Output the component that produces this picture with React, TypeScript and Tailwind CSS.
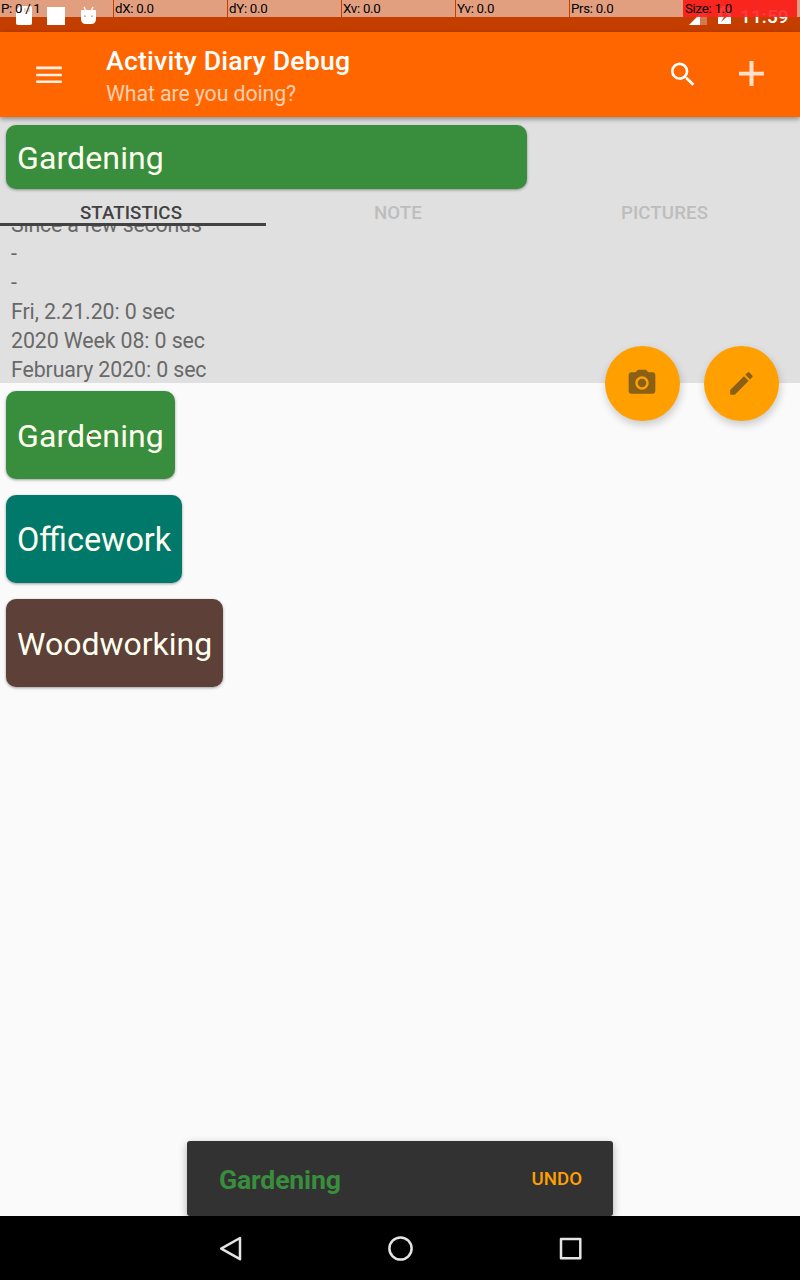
const metrics = ['P: 0 / 1', 'dX: 0.0', 'dY: 0.0', 'Xv: 0.0', 'Yv: 0.0', 'Prs: 0.0', 'Size: 1.0'];

const stats = ['Since a few seconds', '-', '-', 'Fri, 2.21.20: 0 sec', '2020 Week 08: 0 sec', 'February 2020: 0 sec'];

const activities = [
  { name: 'Gardening', style: 'w-[169px] bg-[#388e3c] text-[32px] tracking-[0.12px]' },
  { name: 'Officework', style: 'w-[176px] bg-[#00796b] text-[32.400px]' },
  { name: 'Woodworking', style: 'w-[217px] bg-[#5d4037] text-[32px]' },
];

const cardShadow = 'shadow-[0_1px_3px_rgba(0,0,0,0.38)]';

function StatusBar() {
  return (
    <header className="relative h-8 shrink-0 bg-[#c43e00]">
      <svg className="block h-8 w-[800px]" viewBox="0 0 800 32">
        <path d="M20 6h10q2 0 2 2v15q0 2-2 2H18q-2 0-2-2V10z" fill="#fff" />
        <path d="M21 8v4M25 8v4M29 8v4" stroke="#c43e00" strokeOpacity=".6" strokeWidth="1.4" />
        <path d="M47 7h18v18H47z" fill="#fff" />
        <path d="M84 7l2 4M93 7l-2 4" stroke="#fff" strokeWidth="1.3" />
        <path d="M81 11q0-1 1-1h13q1 0 1 1v8q0 5-5 5h-5q-5 0-5-5z" fill="#fff" />
        <circle cx="85" cy="16.2" r="0.9" fill="#c43e00" />
        <circle cx="92" cy="16.2" r="0.9" fill="#c43e00" />
        <path d="M707 7v18h-18z" fill="#fff" fillOpacity=".3" />
        <path d="M700 14v11h-11z" fill="#fff" />
        <path d="M722 6h5v2h4v16h-13V8h4z" fill="#fff" />
        <path d="M727 10l-5.500 6h3l-3.500 6 7.500-7h-3z" fill="#c43e00" />
      </svg>
      <span className="absolute top-[5px] left-[740px] text-[19px] leading-[23px] font-medium tracking-[0.1px] text-white">11:59</span>
      <div className="absolute inset-x-0 top-0 flex h-[17px]">
        {metrics.map((label, i) => (
          <div
            key={label}
            className={
              i === 6
                ? 'w-[114px] bg-[#ff2424]/90 pl-0.5'
                : i === 5
                  ? 'w-[113px] bg-white/50 pl-px'
                  : 'mr-px w-[113px] bg-white/50 pl-px'
            }
          >
            <span className="block text-[13.300px] leading-[17px] tracking-[-0.3px] whitespace-nowrap text-black">{label}</span>
          </div>
        ))}
        <div className="flex-1 bg-white/50" />
      </div>
    </header>
  );
}

function AppBar() {
  return (
    <div className="relative z-10 flex h-[85px] shrink-0 items-start bg-[#ff6600] shadow-[0_2px_5px_rgba(0,0,0,0.4)]">
      <svg className="mt-[27px] ml-[33px] size-8" viewBox="0 0 32 32" fill="#fff" fillOpacity=".9">
        <path d="M3.200 7.600h25.600v2.600H3.200zM3.200 14.700h25.600v2.600H3.200zM3.200 21.400h25.600v2.600H3.200z" />
      </svg>
      <div className="ml-[41px] flex-1 pt-[14px]">
        <h1 className="text-[26.667px] leading-[31px] font-medium tracking-[0.2px] text-white">Activity Diary Debug</h1>
        <p className="mt-[4px] text-[21.333px] leading-[25px] tracking-[-0.11px] text-white/70">What are you doing?</p>
      </div>
      <svg className="mt-[26px] size-8 translate-y-[0.5px]" viewBox="0 0 24 24" fill="#fff">
        <path d="M15.500 14h-.79l-.28-.27A6.471 6.471 0 0 0 16 9.500 6.500 6.500 0 1 0 9.500 16c1.610 0 3.090-.59 4.230-1.570l.27.28v.79l5 4.990L20.490 19l-4.990-5zm-6 0C7.010 14 5 11.990 5 9.500S7.010 5 9.500 5 14 7.010 14 9.500 11.990 14 9.500 14z" />
      </svg>
      <svg className="mt-[27px] mr-[33px] ml-[36px] size-8" viewBox="0 0 32 32" fill="#fff" fillOpacity=".8">
        <path d="M14.500 2h4v10.700H29v3.700H18.500V27h-4V16.400H4v-3.700h10.500z" />
      </svg>
    </div>
  );
}

const fabClass =
  'absolute top-[229px] flex size-[75px] items-center justify-center rounded-full bg-[#ffa000] shadow-[1px_4px_9px_rgba(0,0,0,0.2)]';

function Detail() {
  return (
    <section className="relative h-[266px] shrink-0 bg-[#e0e0e0] pt-2">
      <div
        className={`ml-1.5 h-16 w-[521px] rounded-[10px] bg-[#388e3c] pt-[14px] pl-[11px] text-[32px] leading-[38px] tracking-[0.12px] text-[#fffff0] ${cardShadow}`}
      >
        Gardening
      </div>
      <div className="flex h-[37px] text-center text-[18.667px] leading-[22px] font-medium tracking-[0.1px] text-[#bdbdbd]">
        <div className="w-[266px] border-b-[3px] border-[#424242] pt-[13px] pr-1 text-[#424242]">STATISTICS</div>
        <div className="w-[267px] pt-[13px] pr-[3px]">NOTE</div>
        <div className="w-[267px] pt-[13px] pr-[4px]">PICTURES</div>
      </div>
      <div className="h-[157px] overflow-hidden pl-[11px] text-[21.333px] leading-[29px] tracking-[-0.1px] text-[#696969]">
        <div className="-mt-4">
          {stats.map((line, i) => (
            <p key={i} className={i === 0 ? 'tracking-[-0.2px]' : ''}>
              {line}
            </p>
          ))}
        </div>
      </div>
      <button aria-label="Take picture" className={`left-[605px] ${fabClass}`}>
        <svg className="size-8 -translate-x-px -translate-y-px" viewBox="0 0 24 24" fill="#8a6017">
          <circle cx="12" cy="12" r="3.200" />
          <path d="M9 2 7.170 4H4c-1.100 0-2 .9-2 2v12c0 1.100.9 2 2 2h16c1.100 0 2-.9 2-2V6c0-1.100-.9-2-2-2h-3.170L15 2H9zm3 15c-2.760 0-5-2.240-5-5s2.240-5 5-5 5 2.240 5 5-2.240 5-5 5z" />
        </svg>
      </button>
      <button aria-label="Edit" className={`left-[704px] ${fabClass}`}>
        <svg className="size-[30px] -translate-x-[0.6px] -translate-y-[0.6px]" viewBox="0 0 24 24" fill="#8a6017">
          <path d="M3 17.250V21h3.750L17.810 9.940l-3.750-3.750L3 17.250zM20.710 7.040a.996.996 0 0 0 0-1.410l-2.340-2.340a.996.996 0 0 0-1.410 0l-1.830 1.830 3.750 3.750 1.830-1.830z" />
        </svg>
      </button>
    </section>
  );
}

function Snackbar() {
  return (
    <div className="mx-auto flex h-[75px] w-[426px] items-center justify-between rounded-[3px] bg-[#323232] pr-[31px] pl-8 shadow-[0_3px_9px_rgba(0,0,0,0.3)]">
      <span className="pt-[3px] text-[26.667px] leading-[31px] font-bold tracking-[-0.2px] text-[#388e3c]">Gardening</span>
      <button className="text-[18.667px] leading-[22px] font-medium text-[#ffa000]">UNDO</button>
    </div>
  );
}

function NavigationBar() {
  return (
    <nav className="h-16 shrink-0 bg-black">
      <svg className="block h-16 w-[800px]" viewBox="0 0 800 64" fill="none" stroke="#e4e4e4" strokeWidth="2.500" strokeLinejoin="round">
        <path d="M240 22v21.200L221.200 32.600z" />
        <circle cx="400.500" cy="32.500" r="11.100" />
        <path d="M561 23h19.300v19.300H561z" />
      </svg>
    </nav>
  );
}

export default function App() {
  return (
    <div className="flex h-[1280px] w-[800px] flex-col overflow-hidden bg-[#fafafa] font-['Roboto',sans-serif]">
      <StatusBar />
      <AppBar />
      <Detail />
      <main className="flex flex-1 flex-col">
        <div className="flex flex-col gap-4 pt-2 pl-1.5">
          {activities.map(({ name, style }) => (
            <div
              key={name}
              className={`relative flex h-[88px] items-center rounded-[10px] pt-[2px] pl-[11px] leading-[38px] text-[#fffff0] ${style} ${cardShadow}`}
            >
              {name}
              {name === 'Gardening' && <span className="absolute top-[43px] left-[83px] h-0.5 w-0.5 bg-red-600" />}
            </div>
          ))}
        </div>
        <div className="mt-auto">
          <Snackbar />
        </div>
      </main>
      <NavigationBar />
    </div>
  );
}
